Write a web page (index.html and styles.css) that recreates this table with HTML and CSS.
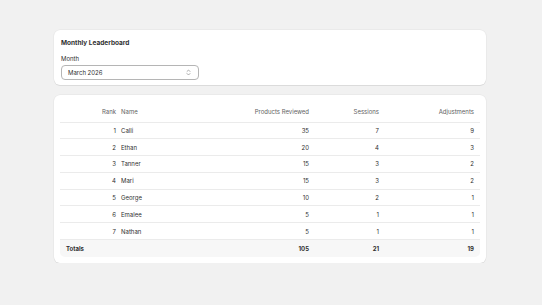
FILE: index.html
```html
<!DOCTYPE html>
<html lang="en">
<head>
<meta charset="utf-8">
<title>Monthly Leaderboard</title>
<link rel="stylesheet" href="styles.css">
</head>
<body>
<main class="page">
  <section class="card filter-card">
    <h2 class="card-title">Monthly Leaderboard</h2>
    <label class="field-label" for="month">Month</label>
    <div class="select" id="month">
      <span class="select-value">March 2026</span>
      <svg class="select-icon" viewBox="0 0 10 14" width="5" height="7" aria-hidden="true">
        <path d="M2 5 L5 2 L8 5 M2 9 L5 12 L8 9" fill="none" stroke="#8a8a8a" stroke-width="1.4" stroke-linecap="round" stroke-linejoin="round"/>
      </svg>
    </div>
  </section>

  <section class="card table-card">
    <table class="board">
      <colgroup>
        <col class="c-rank"><col class="c-name"><col class="c-prod"><col class="c-sess"><col class="c-adj">
      </colgroup>
      <thead>
        <tr><th class="num rank">Rank</th><th class="name">Name</th><th class="num">Products Reviewed</th><th class="num">Sessions</th><th class="num">Adjustments</th></tr>
      </thead>
      <tbody>
        <tr><td class="num rank">1</td><td class="name">Calli</td><td class="num">35</td><td class="num">7</td><td class="num">9</td></tr>
        <tr><td class="num rank">2</td><td class="name">Ethan</td><td class="num">20</td><td class="num">4</td><td class="num">3</td></tr>
        <tr><td class="num rank">3</td><td class="name">Tanner</td><td class="num">15</td><td class="num">3</td><td class="num">2</td></tr>
        <tr><td class="num rank">4</td><td class="name">Mari</td><td class="num">15</td><td class="num">3</td><td class="num">2</td></tr>
        <tr><td class="num rank">5</td><td class="name">George</td><td class="num">10</td><td class="num">2</td><td class="num">1</td></tr>
        <tr><td class="num rank">6</td><td class="name">Emalee</td><td class="num">5</td><td class="num">1</td><td class="num">1</td></tr>
        <tr><td class="num rank">7</td><td class="name">Nathan</td><td class="num">5</td><td class="num">1</td><td class="num">1</td></tr>
      </tbody>
      <tfoot>
        <tr><td class="total-label" colspan="2">Totals</td><td class="num">105</td><td class="num">21</td><td class="num">19</td></tr>
      </tfoot>
    </table>
  </section>
</main>
</body>
</html>
```

FILE: styles.css
```css
* { box-sizing: border-box; }
html, body { margin: 0; padding: 0; }
body {
  background: #f1f1f1;
  font-family: Inter, "Noto Sans", sans-serif;
  font-size: 6px;
  color: #303030;
}
.page {
  width: 432px;
  margin: 0 0 0 54px;
  padding-top: 30px;
  display: flex;
  flex-direction: column;
  gap: 10px;
}
.card {
  background: #fff;
  border-radius: 6px;
  box-shadow: 0 1px 0 rgba(26,26,26,0.07), 0 0 0 0.5px rgba(0,0,0,0.06);
}
.filter-card {
  padding: 7px 7px 5px 7px;
  display: flex;
  flex-direction: column;
}
.card-title {
  margin: 0;
  font-size: 6.5px;
  font-weight: 650;
  line-height: 10px;
  padding-top: 1px;
}
.field-label {
  margin-top: 6px;
  line-height: 9px;
}
.select {
  margin-top: 2px;
  width: 138px;
  height: 15px;
  border: 0.5px solid #b5b5b5;
  border-radius: 4px;
  display: flex;
  align-items: center;
  justify-content: space-between;
  padding: 0 7px 0 6px;
}
.select-icon { display: block; }
.table-card {
  padding: 8px 6px 6px 6px;
}
.board {
  width: 420px;
  border-collapse: separate;
  border-spacing: 0;
  table-layout: fixed;
}
.c-rank { width: 59px; }
.c-name { width: 100px; }
.c-prod { width: 96px; }
.c-sess { width: 70px; }
.c-adj { width: 95px; }
.board th, .board td {
  height: 16.8px;
  padding: 0 6px;
  font-weight: 400;
  white-space: nowrap;
  border-bottom: 0.5px solid #ebebeb;
}
.board th {
  color: #616161;
  height: 19.5px;
  padding-bottom: 1px;
}
.board .num { text-align: right; }
.board .name { text-align: left; }
.board .rank { padding-right: 3px; }
.board .name { padding-left: 2px; }
.board tfoot td {
  background: #f7f7f7;
  font-weight: 650;
  border-bottom: none;
}
.board .total-label { text-align: left; }
.board tfoot td:first-child { border-radius: 0 0 0 5px; }
.board tfoot td:last-child { border-radius: 0 0 5px 0; }
```
